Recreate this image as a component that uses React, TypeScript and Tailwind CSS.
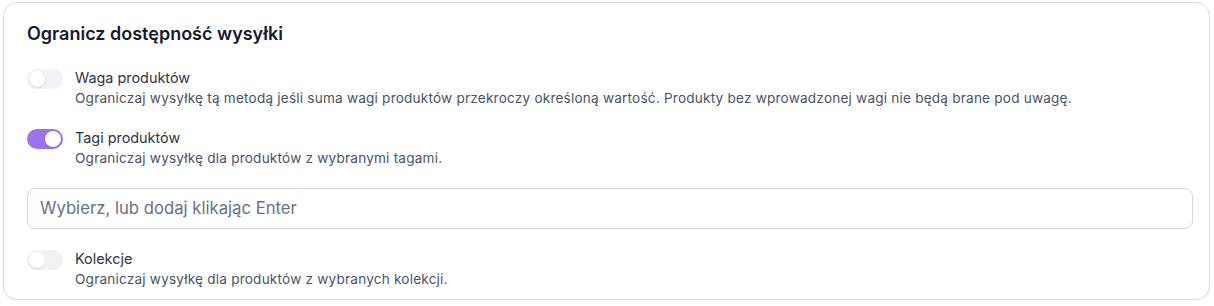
import React from "react";

function Toggle({ on }: { on: boolean }) {
  return (
    <div
      className={
        on
          ? "mt-[1px] flex h-[20px] w-[36px] shrink-0 items-center justify-end rounded-full bg-[#9d72e6] px-[2px]"
          : "mt-[1px] flex h-[20px] w-[36px] shrink-0 items-center justify-start rounded-full bg-[#f1f2f5] px-[2px]"
      }
    >
      <div className="h-[16px] w-[16px] rounded-full bg-white shadow-[0_1px_2px_rgba(0,0,0,0.12)]" />
    </div>
  );
}

function Row({ on, label, desc }: { on: boolean; label: string; desc: string }) {
  return (
    <div className="flex items-start gap-[12px]">
      <Toggle on={on} />
      <div className="flex flex-col">
        <div className="text-[14.4px] leading-[20px] text-[#2f3545]">{label}</div>
        <div className="text-[13.6px] leading-[20px] tracking-[0.2px] text-[#4b5263]">{desc}</div>
      </div>
    </div>
  );
}

export default function App() {
  return (
    <div className="bg-white pl-[3px] pr-[4px] pt-[2px]" style={{ fontFamily: "Inter, 'Noto Sans', sans-serif" }}>
      <div className="flex flex-col gap-5 rounded-[14px] border border-[#dcdfe6] bg-white pb-[10px] pl-[23px] pr-[16px] pt-[19px] shadow-[0_1px_2px_rgba(0,0,0,0.06)]">
        <h2 className="mb-[2px] text-[18px] font-semibold leading-[24px] text-[#151a2d]">Ogranicz dostępność wysyłki</h2>
        <Row
          on={false}
          label="Waga produktów"
          desc="Ograniczaj wysyłkę tą metodą jeśli suma wagi produktów przekroczy określoną wartość. Produkty bez wprowadzonej wagi nie będą brane pod uwagę."
        />
        <Row on={true} label="Tagi produktów" desc="Ograniczaj wysyłkę dla produktów z wybranymi tagami." />
        <div className="flex h-[41px] items-center rounded-[8px] border border-[#d3d6de] px-[12px]">
          <input
            className="w-full bg-transparent text-[16.7px] text-[#2f3545] outline-none placeholder:text-[#6b7181]"
            placeholder="Wybierz, lub dodaj klikając Enter"
          />
        </div>
        <Row on={false} label="Kolekcje" desc="Ograniczaj wysyłkę dla produktów z wybranych kolekcji." />
      </div>
    </div>
  );
}
